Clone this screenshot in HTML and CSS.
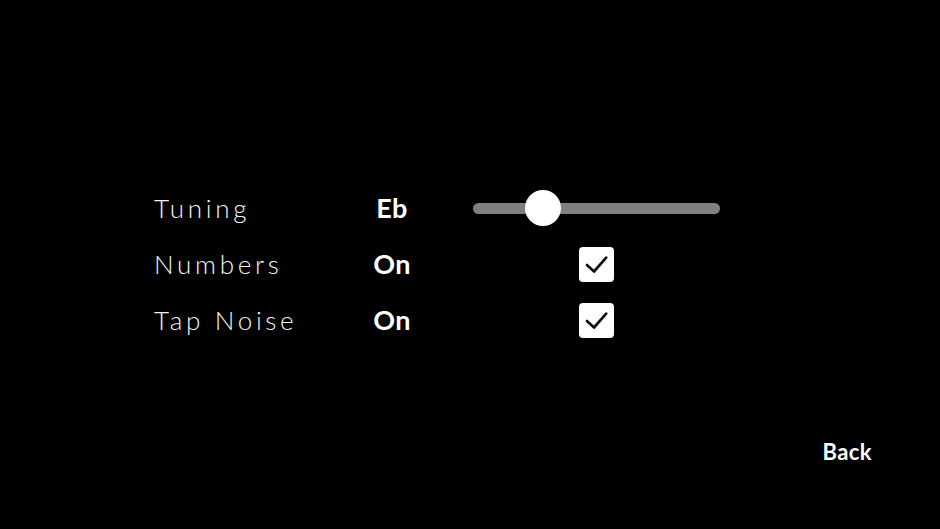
FILE: index.html
```html
<!DOCTYPE html>
<html>
<head>
<meta charset="utf-8">
<link rel="stylesheet" href="styles.css">
</head>
<body>
<div class="page">
  <div class="settings">
    <div class="label">Tuning</div>
    <div class="value">Eb</div>
    <div class="control">
      <div class="slider">
        <div class="track"></div>
        <div class="knob" style="left: 70px"></div>
      </div>
    </div>

    <div class="label">Numbers</div>
    <div class="value">On</div>
    <div class="control">
      <div class="checkbox">
        <svg viewBox="0 0 35 35" width="35" height="35"><path d="M8 18 L15 24.5 L27.2 10.6" fill="none" stroke="#111" stroke-width="2.7" stroke-linecap="round" stroke-linejoin="round"/></svg>
      </div>
    </div>

    <div class="label">Tap Noise</div>
    <div class="value">On</div>
    <div class="control">
      <div class="checkbox">
        <svg viewBox="0 0 35 35" width="35" height="35"><path d="M8 18 L15 24.5 L27.2 10.6" fill="none" stroke="#111" stroke-width="2.7" stroke-linecap="round" stroke-linejoin="round"/></svg>
      </div>
    </div>
  </div>
  <div class="footer">
    <div class="back">Back</div>
  </div>
</div>
</body>
</html>
```

FILE: styles.css
```css
html, body {
  margin: 0;
  padding: 0;
  background: #000;
}
.page {
  width: 940px;
  height: 529px;
  display: flex;
  flex-direction: column;
  font-family: "Lato", "Noto Sans", sans-serif;
  color: #fff;
}
.settings {
  padding-top: 180px;
  padding-left: 154px;
  display: grid;
  grid-template-columns: 198px 80px 247px;
  grid-auto-rows: 56px;
  align-items: center;
}
.label {
  font-size: 26px;
  font-weight: 300;
  letter-spacing: 3.7px;
  color: #f4f4f4;
  line-height: 30px;
}
.value {
  font-size: 27px;
  font-weight: 700;
  text-align: center;
  line-height: 30px;
  letter-spacing: 0.3px;
}
.control {
  margin-left: 41px;
  width: 247px;
  display: flex;
  justify-content: center;
  align-items: center;
  height: 56px;
}
.slider {
  position: relative;
  width: 247px;
  height: 36px;
  display: flex;
  align-items: center;
}
.track {
  width: 100%;
  height: 11px;
  border-radius: 6px;
  background: #7f7f7f;
}
.knob {
  position: absolute;
  top: 0;
  width: 36px;
  height: 36px;
  border-radius: 50%;
  background: #fff;
  transform: translateX(-18px);
}
.checkbox {
  width: 35px;
  height: 35px;
  border-radius: 4px;
  background: #fff;
  display: flex;
}
.footer {
  margin-top: 89px;
  display: flex;
  justify-content: flex-end;
  padding-right: 68px;
}
.back {
  font-size: 22px;
  font-weight: 700;
  line-height: 30px;
  letter-spacing: 0.4px;
}
```
